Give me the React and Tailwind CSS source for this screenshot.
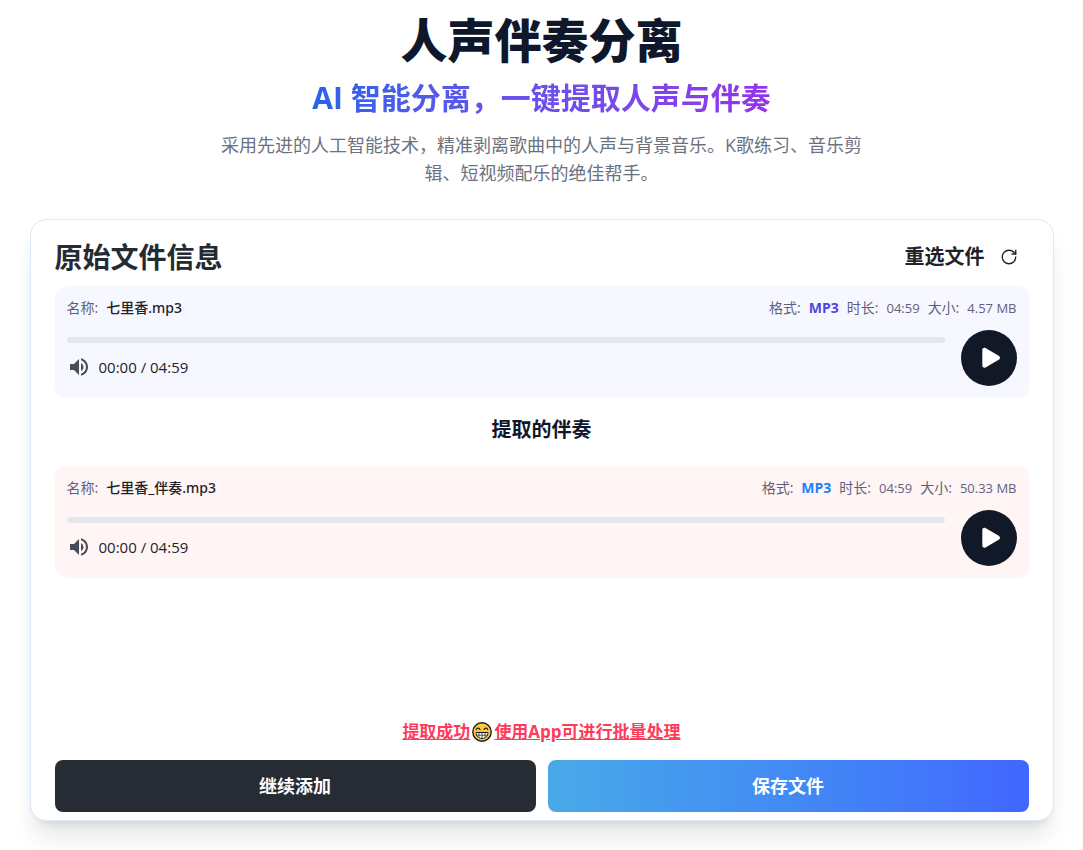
import { useState } from "react";
import { RotateCw } from "lucide-react";
import { MdVolumeUp } from "react-icons/md";

const PlayIcon = () => (
  <svg viewBox="0 0 24 24" className="size-6" fill="currentColor" aria-hidden="true">
    <path d="M5.300 4v15.500c0 1.800 1.700 2.700 3.200 1.900l13.200-7.600c1.700-1 1.700-3.100 0-4.100L8.500 2.100C7 1.300 5.300 2.200 5.300 4z" />
  </svg>
);

const GrinIcon = () => (
  <svg viewBox="0 0 20 20" className="inline-block size-5 mx-0.5 align-[-4px]" aria-hidden="true">
    <circle cx="10" cy="10" r="9.200" fill="#ffc83d" stroke="#1c1c1c" strokeWidth="1.400" />
    <path
      d="M4.300 7.600C4.700 5.600 7.500 5.600 8 7.600M12 7.600C12.500 5.600 15.300 5.600 15.700 7.600"
      fill="none"
      stroke="#1c1c1c"
      strokeWidth="1.100"
      strokeLinecap="round"
    />
    <path
      d="M4 10.500h12c0 3.500-2.500 6-6 6s-6-2.500-6-6z"
      fill="#fff"
      stroke="#1c1c1c"
      strokeWidth="1"
      strokeLinejoin="round"
    />
    <path d="M4.500 13.200h11M7 10.500v5M10 10.500v6M13 10.500v5" stroke="#1c1c1c" strokeWidth=".7" />
  </svg>
);

const Player = ({ name, format, duration, size, className, formatClassName }) => {
  const [position, setPosition] = useState(0);
  return (
    <div className={`rounded-xl p-3 ${className}`}>
      <div className="flex items-center justify-between text-sm leading-5 text-[#625f7d]">
        <div className="flex gap-2">
          <span>名称:</span>
          <span className="font-['Noto_Sans','Noto_Sans_CJK_SC',sans-serif] font-medium text-[#1f2329]">
            {name}
          </span>
        </div>
        <div className="flex gap-2">
          <span>格式:</span>
          <span className={`font-bold ${formatClassName}`}>{format}</span>
          <span>时长:</span>
          <span className="text-[13px]">{duration}</span>
          <span>大小:</span>
          <span className="text-[13px]">{size}</span>
        </div>
      </div>
      <div className="mt-3 flex items-center gap-4">
        <div className="flex-1">
          <input
            type="range"
            min="0"
            max="299"
            value={position}
            onChange={(event) => setPosition(Number(event.target.value))}
            aria-label={name}
            className="block h-1.5 w-full appearance-none rounded-full bg-[#e5e7ea] [&::-webkit-slider-thumb]:opacity-0"
          />
          <div className="mt-3 flex items-center gap-2">
            <button type="button" aria-label="音量" className="text-[#454d5a]">
              <MdVolumeUp className="size-6" />
            </button>
            <span className="text-[15px] leading-6 text-[#1f2329]">00:00 / {duration}</span>
          </div>
        </div>
        <button
          type="button"
          aria-label="播放"
          className="flex size-14 items-center justify-center rounded-full bg-[#111827] text-white"
        >
          <PlayIcon />
        </button>
      </div>
    </div>
  );
};

const App = () => {
  return (
    <main className="bg-white px-4 pb-7 font-['Open_Sans','Noto_Sans_CJK_SC',sans-serif]">
      <header className="text-center">
        <h1 className="pt-3.5 text-[47px] leading-[52px] font-extrabold text-[#0f172a]">
          人声伴奏分离
        </h1>
        <p className="mt-3.5 text-3xl leading-9 font-bold">
          <span className="bg-linear-to-r from-[#2563eb] to-[#9333ea] bg-clip-text text-transparent">
            AI 智能分离，一键提取人声与伴奏
          </span>
        </p>
        <p className="mx-auto mt-[15px] max-w-[648px] text-lg leading-7 text-[#6b7280]">
          采用先进的人工智能技术，精准剥离歌曲中的人声与背景音乐。K歌练习、音乐剪辑、短视频配乐的绝佳帮手。
        </p>
      </header>

      <section className="mx-auto mt-8 flex min-h-[602px] max-w-5xl flex-col rounded-2xl border border-[#dbe8fe] bg-white px-6 pt-4 pb-2 shadow-xl">
        <div className="mb-2 flex items-center justify-between">
          <h2 className="text-[28px] leading-[42px] font-bold text-[#252b33]">原始文件信息</h2>
          <button
            type="button"
            className="flex items-center gap-[15px] pr-[11px] text-xl font-bold text-[#1f2329]"
          >
            重选文件
            <RotateCw className="size-4.5" strokeWidth={1.75} />
          </button>
        </div>
        <Player
          name="七里香.mp3"
          format="MP3"
          duration="04:59"
          size="4.57 MB"
          className="bg-[#f7f7ff]"
          formatClassName="text-[#4f46e5]"
        />
        <h3 className="mt-3.5 mb-4.5 text-center text-xl leading-9 font-bold text-[#0f172a]">
          提取的伴奏
        </h3>
        <Player
          name="七里香_伴奏.mp3"
          format="MP3"
          duration="04:59"
          size="50.33 MB"
          className="bg-[#fff5f5]"
          formatClassName="text-[#1e80ff]"
        />
        <div className="mt-auto">
          <p className="mb-4 text-center text-[17px] leading-6 font-bold">
            <a href="#" className="text-[#ff3b5c] underline">
              提取成功
              <GrinIcon />
              使用App可进行批量处理
            </a>
          </p>
          <div className="grid grid-cols-2 gap-3 text-lg font-bold text-white">
            <button type="button" className="h-13 rounded-lg bg-[#272b33]">
              继续添加
            </button>
            <button
              type="button"
              className="h-13 rounded-lg bg-linear-to-r from-[#49a9e8] to-[#4266ff]"
            >
              保存文件
            </button>
          </div>
        </div>
      </section>
    </main>
  );
};

export default App;
